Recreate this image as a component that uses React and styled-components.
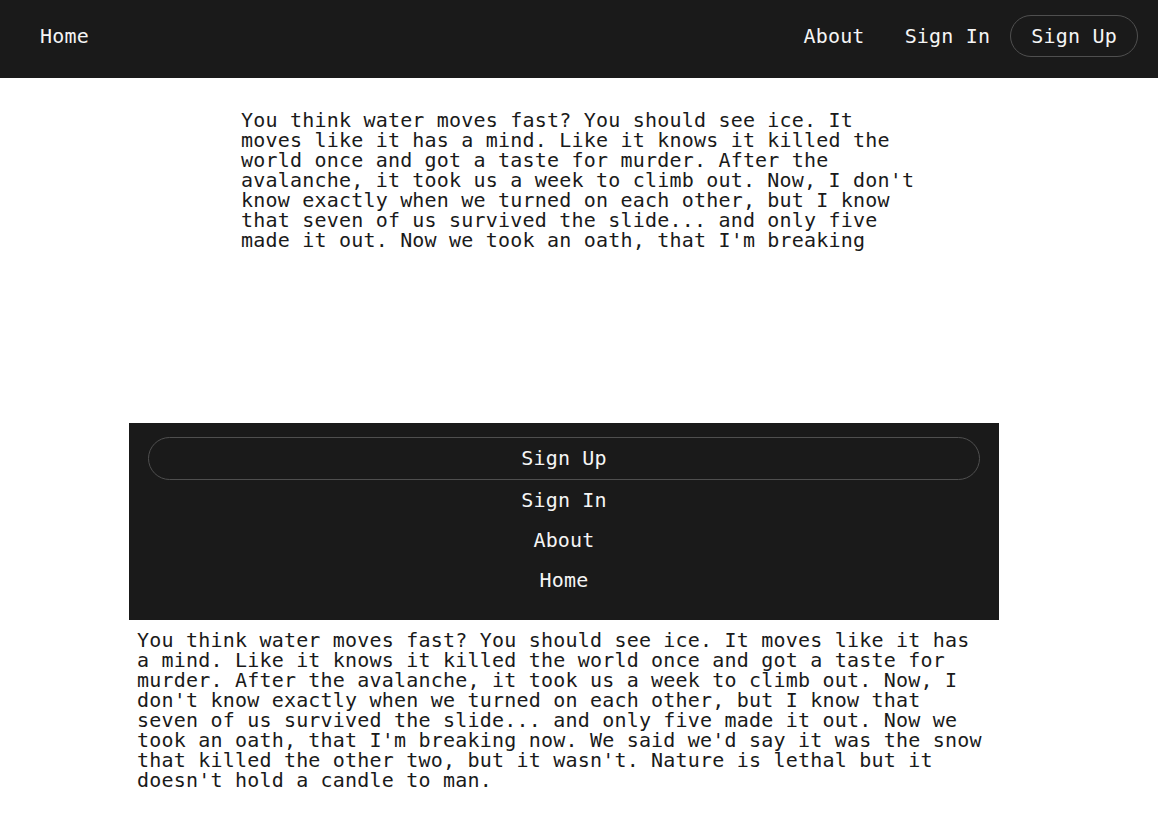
import * as React from "react";
import styled, { createGlobalStyle } from "styled-components";

const story =
  "You think water moves fast? You should see ice. It moves like it has a mind. Like it knows it killed the world once and got a taste for murder. After the avalanche, it took us a week to climb out. Now, I don't know exactly when we turned on each other, but I know that seven of us survived the slide... and only five made it out. Now we took an oath, that I'm breaking now. We said we'd say it was the snow that killed the other two, but it wasn't. Nature is lethal but it doesn't hold a candle to man.";

const intro =
  "You think water moves fast? You should see ice. It moves like it has a mind. Like it knows it killed the world once and got a taste for murder. After the avalanche, it took us a week to climb out. Now, I don't know exactly when we turned on each other, but I know that seven of us survived the slide... and only five made it out. Now we took an oath, that I'm breaking";

const menuLinks = ["Sign In", "About", "Home"];

function App() {
  return (
    <>
      <GlobalStyle />
      <Page>
        <Header>
          <NavLink href="#">Home</NavLink>
          <NavRight>
            <NavLink href="#">About</NavLink>
            <NavLink href="#">Sign In</NavLink>
            <PillLink href="#">Sign Up</PillLink>
          </NavRight>
        </Header>

        <Intro>
          <Paragraph>{intro}</Paragraph>
        </Intro>

        <Panel>
          <MobileMenu>
            <MenuPill href="#">Sign Up</MenuPill>
            {menuLinks.map((label) => (
              <MenuLink key={label} href="#">
                {label}
              </MenuLink>
            ))}
          </MobileMenu>
          <StoryText>{story}</StoryText>
        </Panel>
      </Page>
    </>
  );
}

const GlobalStyle = createGlobalStyle`
  * {
    box-sizing: border-box;
  }
  body {
    margin: 0;
    background: #fff;
    font-family: "DejaVu Sans Mono", "Liberation Mono", monospace;
    color: #1a1a1a;
  }
  a {
    text-decoration: none;
  }
`;

const Page = styled.div`
  display: flex;
  flex-direction: column;
  min-height: 833px;
`;

const Header = styled.header`
  display: flex;
  align-items: center;
  justify-content: space-between;
  height: 78px;
  padding: 0 20px 6px;
  background-color: #1a1a1a;
`;

const NavRight = styled.nav`
  display: flex;
  align-items: center;
`;

const NavLink = styled.a`
  display: block;
  padding: 10px 20px;
  color: #f5f5f5;
  font-size: 20px;
  line-height: 20px;
  letter-spacing: 0.2px;
`;

const PillLink = styled(NavLink)`
  display: flex;
  align-items: center;
  height: 42px;
  padding: 0 20px;
  border: 1px solid #4f4f4f;
  border-radius: 21px;
`;

const Intro = styled.section`
  width: 676px;
  margin: 32px auto 0;
  height: 313px;
`;

const Paragraph = styled.p`
  margin: 0;
  font-size: 20px;
  line-height: 20px;
  letter-spacing: 0.2px;
  color: #1a1a1a;
`;

const Panel = styled.section`
  width: 870px;
  margin: 0 auto 0 129px;
`;

const MobileMenu = styled.nav`
  display: flex;
  flex-direction: column;
  align-items: stretch;
  padding: 14px 19px 20px;
  background-color: #1a1a1a;
`;

const MenuLink = styled.a`
  display: flex;
  align-items: center;
  justify-content: center;
  height: 40px;
  color: #f5f5f5;
  font-size: 20px;
  letter-spacing: 0.2px;
`;

const MenuPill = styled(MenuLink)`
  height: 43px;
  padding-bottom: 2px;
  border: 1px solid #4f4f4f;
  border-radius: 22px;
`;

const StoryText = styled.p`
  margin: 10px 0 0;
  padding: 0 12px 0 8px;
  font-size: 20px;
  line-height: 20px;
  letter-spacing: 0.2px;
  color: #1a1a1a;
`;

export default App;
